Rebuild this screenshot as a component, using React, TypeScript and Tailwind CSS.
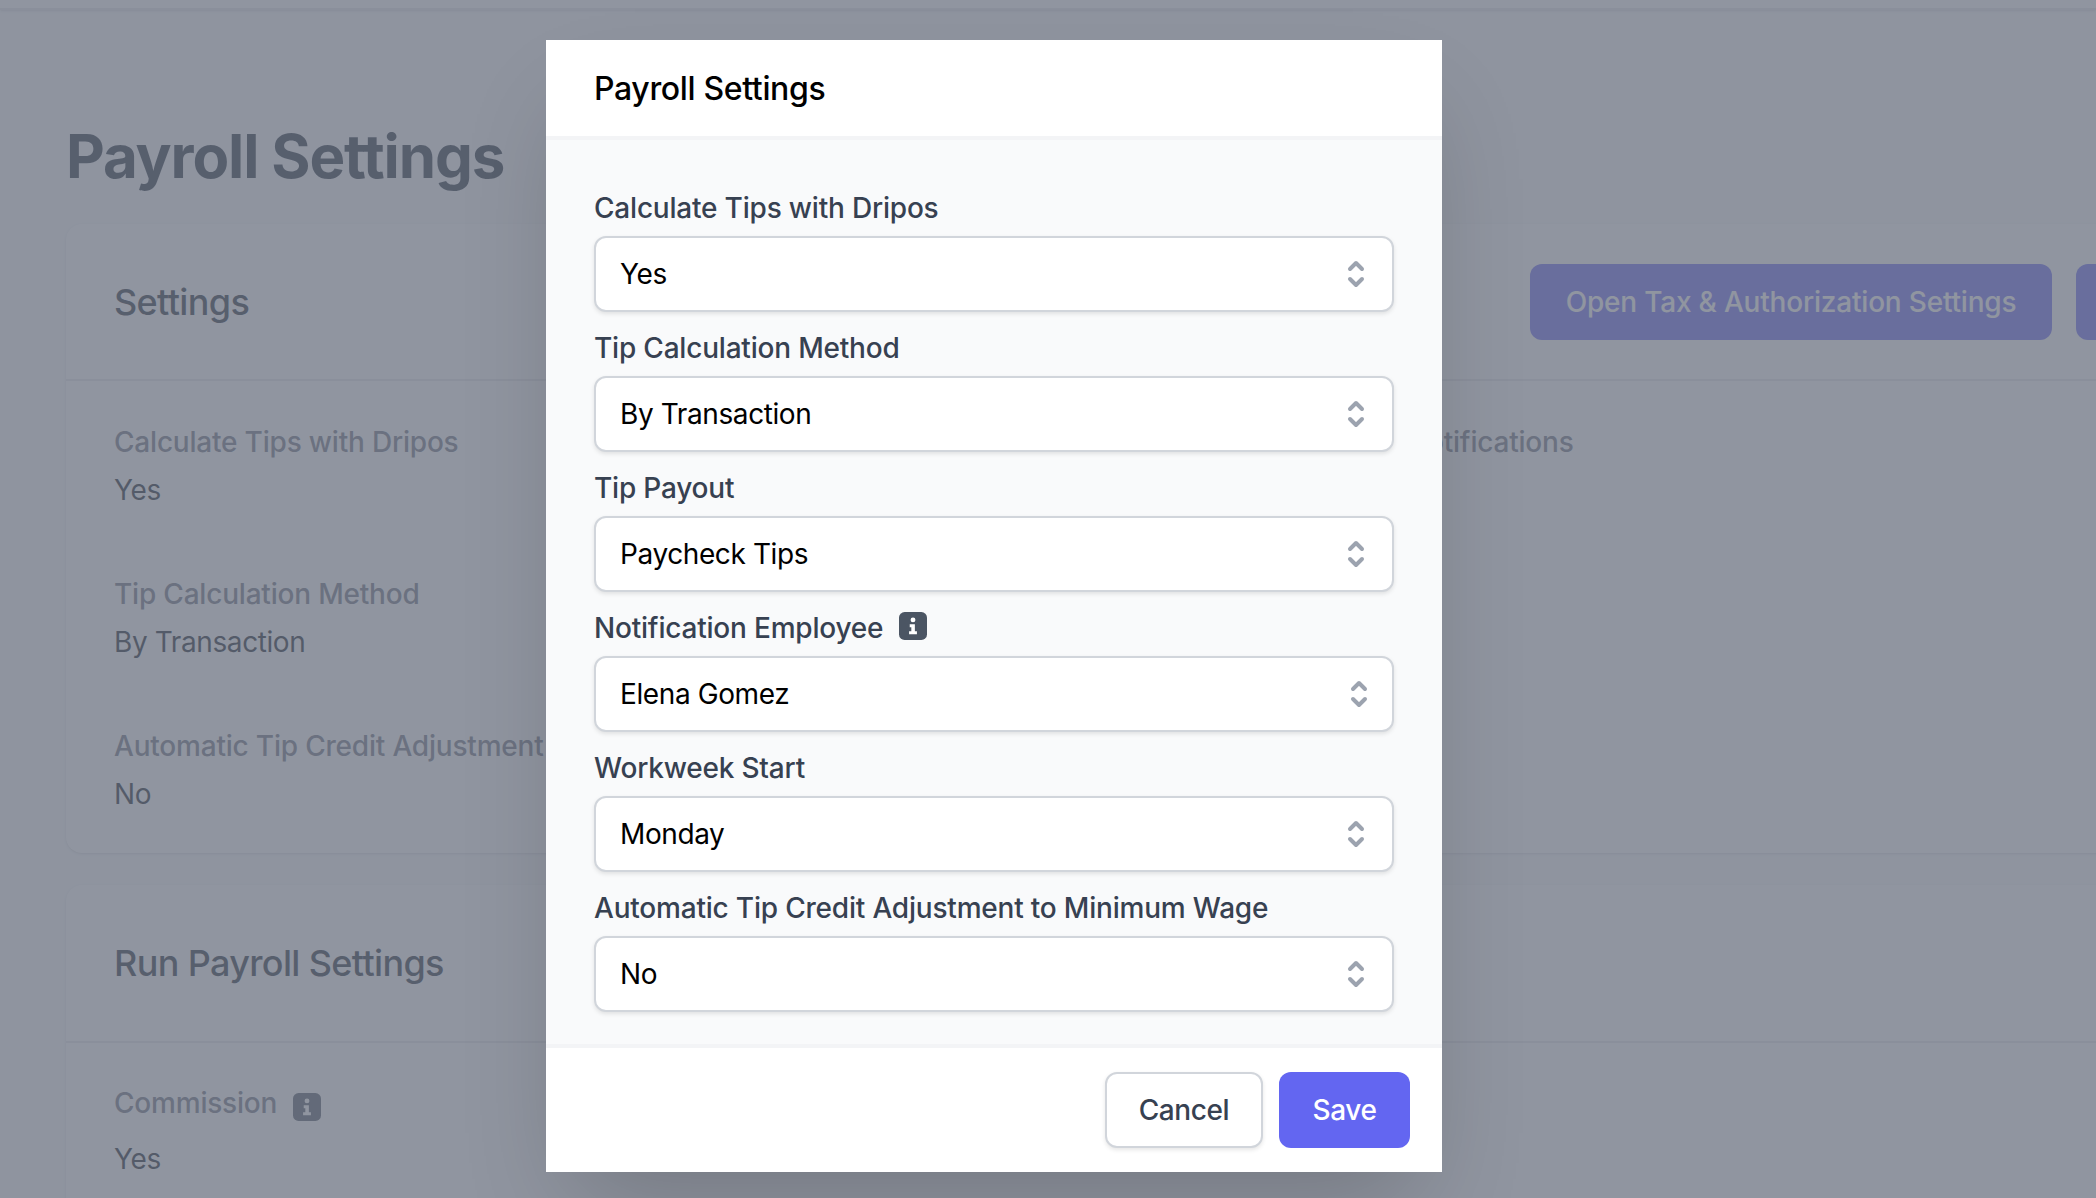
import React from 'react'

const FIELDS = [
  { label: 'Calculate Tips with Dripos', value: 'Yes' },
  { label: 'Tip Calculation Method', value: 'By Transaction' },
  { label: 'Tip Payout', value: 'Paycheck Tips' },
  { label: 'Notification Employee', value: 'Elena Gomez', info: true, shift: true },
  { label: 'Workweek Start', value: 'Monday' },
  { label: 'Automatic Tip Credit Adjustment to Minimum Wage', value: 'No' },
]

const InfoIcon: React.FC<{ className?: string }> = ({ className }) => (
  <svg viewBox="0 0 30 30" className={className}>
    <rect x="0" y="0" width="30" height="30" rx="6" fill="currentColor" />
    <circle cx="15" cy="8.500" r="2.600" fill="#fff" />
    <path d="M11.500 13h5.500v7.500h2.200v3.300h-8.400v-3.300h2.400v-4.200h-1.700z" fill="#fff" />
  </svg>
)

const Chevrons: React.FC<{ className?: string }> = ({ className }) => (
  <svg viewBox="0 0 18 32" fill="none" className={className}>
    <path d="M3 11 9 5l6 6M3 21l6 6 6-6" stroke="#9ca3af" strokeWidth="4" strokeLinecap="round" strokeLinejoin="round" />
  </svg>
)

const Item: React.FC<{ label: string; value: string }> = ({ label, value }) => (
  <div>
    <div className="text-[28px] leading-[40px] font-medium tracking-[-0.2px] text-[#6b7280]">{label}</div>
    <div className="mt-2 text-[28px] leading-[40px] tracking-[-0.4px] text-[#111827]">{value}</div>
  </div>
)

const App: React.FC = () => {
  return (
    <div className="relative h-screen w-screen overflow-hidden bg-[#f9fafb] font-[Inter,sans-serif]">
      <div className="h-[10px] border-b-2 border-[#e5e7eb] bg-white shadow-sm" />

      <div className="w-[3000px] pl-[66px]">
        <h1 className="mt-[110px] text-[60px] leading-[72px] font-bold tracking-[-1.15px] text-[#1f2937]">Payroll Settings</h1>

        <section className="mt-[32px] rounded-2xl bg-white shadow-sm">
          <div className="flex h-[157px] items-center border-b-2 border-[#e5e7eb] px-12">
            <h2 className="w-[1416px] text-[36px] leading-[48px] font-medium tracking-[-0.65px] text-[#1f2937]">Settings</h2>
            <div className="flex gap-6">
              <button className="h-[76px] w-[522px] rounded-xl bg-[#6366f1] text-[28px] font-medium tracking-[-0.2px] text-white">Open Tax &amp; Authorization Settings</button>
              <button className="h-[76px] w-[400px] rounded-xl bg-[#6366f1]" />
            </div>
          </div>
          <div className="grid grid-cols-[1292px_1fr] px-12 pt-[41px] pb-[39px]">
            <div className="flex flex-col gap-16">
              <Item label="Calculate Tips with Dripos" value="Yes" />
              <Item label="Tip Calculation Method" value="By Transaction" />
              <Item label="Automatic Tip Credit Adjustment" value="No" />
            </div>
            <div className="text-[28px] leading-[40px] font-medium tracking-[-0.2px] text-[#6b7280]">Notifications</div>
          </div>
        </section>

        <section className="mt-8 rounded-t-2xl bg-white shadow-sm">
          <div className="flex h-[158px] items-center border-b-2 border-[#e5e7eb] px-12">
            <h2 className="text-[36px] leading-[48px] font-medium tracking-[-0.65px] text-[#1f2937]">Run Payroll Settings</h2>
          </div>
          <div className="px-12 pt-10 pb-10">
            <div className="flex items-center gap-4 text-[28px] leading-[40px] font-medium tracking-[-0.2px] text-[#6b7280]">
              <span>Commission</span>
              <InfoIcon className="mt-2 h-7 w-7 text-[#4b5563]" />
            </div>
            <div className="mt-4 text-[28px] leading-[40px] tracking-[-0.4px] text-[#111827]">Yes</div>
          </div>
        </section>
      </div>

      <div className="absolute inset-0 bg-[#6b7280]/75" />

      <div className="absolute top-[40px] left-[546px] flex h-[1132px] w-[896px] flex-col bg-white shadow-[0_50px_100px_-24px_rgba(0,0,0,0.2)]">
        <div className="flex h-[100px] shrink-0 items-center border-b-4 border-[#f3f4f6] px-12 pt-[2px]">
          <h3 className="text-[32px] leading-[48px] font-medium tracking-[-0.35px] text-black">Payroll Settings</h3>
        </div>

        <div className="flex flex-1 flex-col gap-4 border-b-4 border-[#f3f4f6] bg-[#f9fafb] px-12 pt-[48px]">
          {FIELDS.map((f) => (
            <div key={f.label}>
              <div className="flex h-10 items-center gap-4 text-[28px] leading-[40px] font-medium tracking-[-0.2px] text-[#374151]">
                <span>{f.label}</span>
                {f.info && <InfoIcon className="-mt-1 h-[28px] w-[28px] text-[#4b5563]" />}
              </div>
              <div className="mt-2 flex h-[76px] items-center justify-between rounded-xl border-2 border-[#d1d5db] bg-white pr-[27px] pl-6 text-[28px] tracking-[-0.4px] text-black shadow-[0_2px_4px_rgba(0,0,0,0.1)]">
                <span>{f.value}</span>
                <Chevrons className={f.shift ? 'mr-[-3px] h-8 w-[18px]' : 'h-8 w-[18px]'} />
              </div>
            </div>
          ))}
        </div>

        <div className="flex h-[124px] shrink-0 items-start justify-end gap-4 px-8 pt-6">
          <button className="h-[76px] w-[158px] rounded-xl border-2 border-[#d1d5db] bg-white text-[28px] font-medium tracking-[-0.4px] text-[#374151] shadow-[0_2px_4px_rgba(0,0,0,0.1)]">Cancel</button>
          <button className="h-[76px] w-[131px] rounded-xl bg-[#6366f1] text-[28px] font-medium tracking-[-0.4px] text-white">Save</button>
        </div>
      </div>
    </div>
  )
}

export default App
